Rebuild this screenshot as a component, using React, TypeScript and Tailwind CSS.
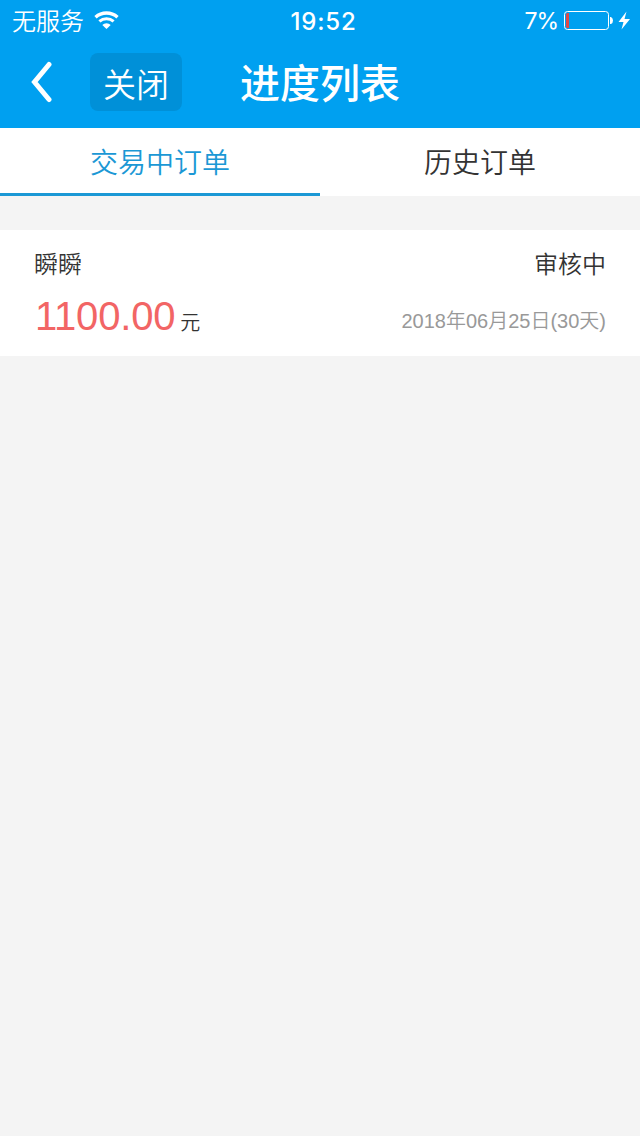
const cjk = "font-['Liberation_Sans','Noto_Sans_CJK_SC',sans-serif]";

function StatusBar() {
  return (
    <div className="flex h-10 items-center justify-between pl-3 pr-[9px] text-white">
      <div className="flex w-60 items-center gap-[10px]">
        <span className="pt-[3px] text-[24px] leading-10 font-[350]">无服务</span>
        <svg width="26" height="20" viewBox="0 0 26 20" fill="none" stroke="white">
          <path d="M1.5 7.2A16.5 16.5 0 0 1 23.5 7.2" strokeWidth="3.4" />
          <path d="M5.4 11.4A10.6 10.6 0 0 1 19.6 11.4" strokeWidth="3" />
          <path d="M12.500 19L8.300 15A6 6 0 0 1 16.700 15Z" fill="white" stroke="none" />
        </svg>
      </div>
      <span className="pt-[3px] pl-[4px] font-[Inter,sans-serif] text-[24px] font-medium tracking-[0.8px]">19:52</span>
      <div className="flex w-60 items-center justify-end pt-[2px]">
        <span className="mr-[6px] font-[Inter,sans-serif] text-[23px] tracking-[-1px]">7%</span>
        <svg width="67" height="20" viewBox="0 0 67 20">
          <rect x="0.5" y="0.5" width="44" height="18" rx="3" fill="none" stroke="white" />
          <path d="M5 2H3.5Q2 2 2 3.5V15.5Q2 17 3.5 17H5Z" fill="#e04848" />
          <path d="M46 6H47Q49 7 49 9.5Q49 12 47 13H46Z" fill="white" />
          <path d="M62.500 0.500L54.500 11H59.500L57.500 18.500L66 8H60.500Z" fill="white" />
        </svg>
      </div>
    </div>
  );
}

export default function App() {
  return (
    <div className={`min-h-[1136px] w-[640px] bg-[#f4f4f4] text-[#333] ${cjk}`}>
      <header className="h-32 bg-[#00a0f0]">
        <StatusBar />
        <div className="grid h-[84px] grid-cols-[1fr_160px_1fr] items-center text-white">
          <div className="flex items-center pl-[30px]">
            <svg width="22" height="42" viewBox="0 0 22 42" fill="none" stroke="white" strokeWidth="5" strokeLinecap="round">
              <path d="M19 3.500L4.500 21L19 38.500" />
            </svg>
            <button className="ml-[38px] h-[58px] w-[92px] rounded-lg bg-[#0090d8] pt-[7px] text-[33px] leading-[51px] font-[350]">关闭</button>
          </div>
          <h1 className="pt-[4px] text-center text-[40px] leading-[80px] font-medium whitespace-nowrap">进度列表</h1>
        </div>
      </header>
      <nav className="grid h-[68px] grid-cols-2 bg-white text-center text-[28px] font-[350]">
        <button className="h-[68px] border-b-3 border-[#1b98d5] pt-[5px] leading-[62px] text-[#1b98d5]">交易中订单</button>
        <button className="h-[68px] border-b-3 border-transparent pt-[5px] leading-[62px]">历史订单</button>
      </nav>
      <section className="mt-[34px] h-[126px] bg-white px-[34px] pt-[16px]">
        <div className="flex h-[38px] items-center justify-between text-[24px] font-[350]">
          <span>瞬瞬</span>
          <span>审核中</span>
        </div>
        <div className="flex h-[64px] items-center justify-between">
          <div className="flex items-baseline text-[20px] font-[350]">
            <span className="pl-px text-[40px] tracking-[-0.2px] text-[#f26565]">1100.00</span>
            <span className="ml-[5px]">元</span>
          </div>
          <span className="pt-[9px] text-[20px] font-[350] text-[#999]">2018年06月25日(30天)</span>
        </div>
      </section>
    </div>
  );
}
